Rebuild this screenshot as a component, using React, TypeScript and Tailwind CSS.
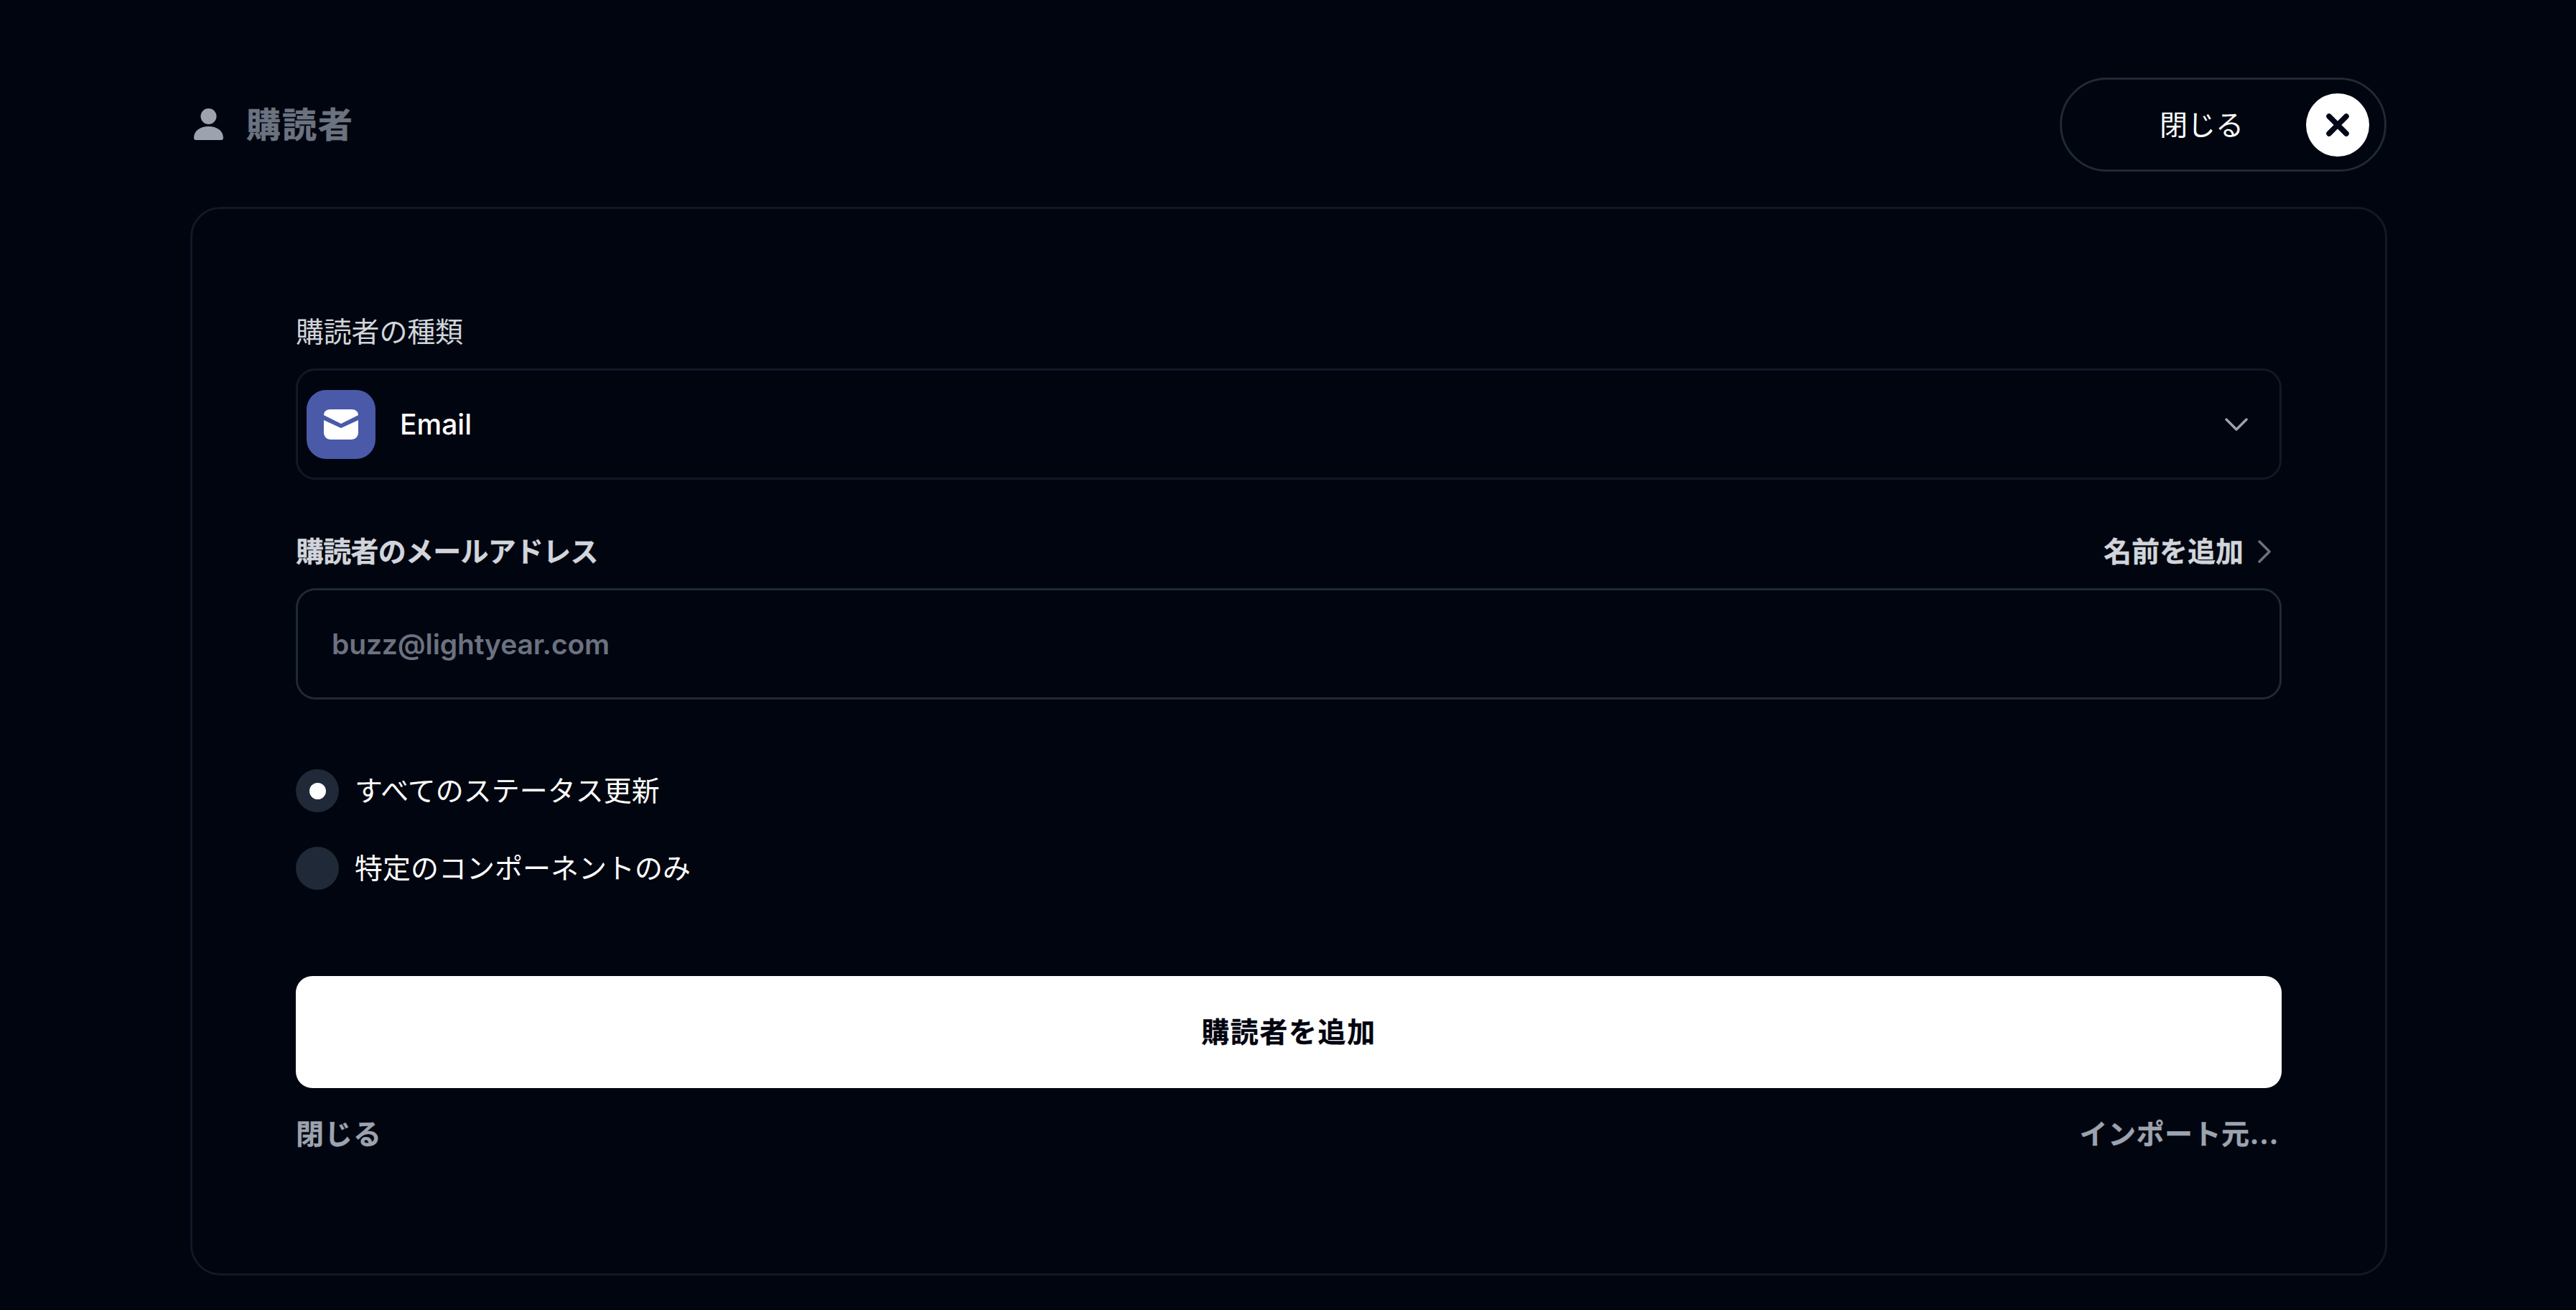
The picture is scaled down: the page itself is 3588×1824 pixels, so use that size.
import React from "react";

const font = "font-['Inter','Noto_Sans_CJK_JP',sans-serif]";

function UserIcon() {
  return (
    <svg width="41" height="45" viewBox="0 0 41 45" fill="#9ca3af">
      <circle cx="20.5" cy="11" r="11" />
      <path d="M0 41 C0 31 9 25 20.5 25 C32 25 41 31 41 41 Q41 44 38 44 L3 44 Q0 44 0 41Z" />
    </svg>
  );
}

function CloseIcon() {
  return (
    <svg width="32" height="32" viewBox="0 0 32 32" fill="none" stroke="#020617" strokeWidth="7.5" strokeLinecap="round">
      <path d="M4 4 L28 28 M28 4 L4 28" />
    </svg>
  );
}

function MailIcon() {
  return (
    <svg width="48" height="42" viewBox="0 0 48 42" fill="#fff">
      <path d="M0 8 L24 20 L48 8 C48 3 44 0 39 0 L9 0 C4 0 0 3 0 8 Z" />
      <path d="M0 15 L24 26 L48 15 L48 32 C48 38 44 42 38 42 L10 42 C4 42 0 38 0 32 Z" />
    </svg>
  );
}

function Radio({ checked, label }: { checked?: boolean; label: string }) {
  return (
    <div className="flex items-center gap-[22px] h-[60px]">
      <span className="flex items-center justify-center w-[60px] h-[60px] rounded-full bg-[#1f2937]">
        {checked && <span className="block w-[23px] h-[23px] rounded-full bg-white" />}
      </span>
      <span className="text-[39px] leading-[60px] text-white">{label}</span>
    </div>
  );
}

export default function App() {
  return (
    <div className={`${font} min-h-screen bg-[#01050f] pl-[265px] pr-[263px] pt-[108px]`}>
      <header className="flex items-center justify-between h-[131px]">
        <div className="flex items-center gap-[32px] pl-[5px]">
          <UserIcon />
          <h1 className="text-[48px] leading-[60px] font-bold tracking-[2px] text-[#6b7280] [-webkit-text-stroke:0.6px_#6b7280]">購読者</h1>
        </div>
        <button className="flex items-center justify-between w-[455px] h-[131px] mr-[1px] rounded-full border-[3px] border-[#1f2937] pl-[136px] pr-[21px]">
          <span className="text-[39px] leading-[60px] text-white">閉じる</span>
          <span className="flex items-center justify-center w-[88px] h-[88px] rounded-full bg-white">
            <CloseIcon />
          </span>
        </button>
      </header>

      <main className="mt-[49px] h-[1488px] rounded-[42px] border-[3px] border-[#111827] px-[144px] pt-[141px]">
        <label className="block text-[39px] leading-[60px] tracking-[-0.2px] text-[#d1d5db]">購読者の種類</label>
        <div className="mt-[21px] flex items-center justify-between h-[155px] rounded-[27px] border-[3px] border-[#111827] pl-[12px] pr-[44px]">
          <div className="flex items-center gap-[34px]">
            <span className="flex items-center justify-center w-[96px] h-[96px] rounded-[27px] bg-[#4a5aa8]">
              <MailIcon />
            </span>
            <span className="text-[39px] leading-[60px] font-medium text-white">Email</span>
          </div>
          <svg width="32" height="18" viewBox="0 0 32 18" fill="none" stroke="#9ca3af" strokeWidth="3.5" strokeLinecap="round" strokeLinejoin="round">
            <path d="M2 2 L16 16 L30 2" />
          </svg>
        </div>

        <div className="mt-[70px] flex items-center justify-between h-[60px]">
          <label className="text-[39px] leading-[60px] font-bold tracking-[-0.75px] text-[#d1d5db] [-webkit-text-stroke:0.3px_#d1d5db]">購読者のメールアドレス</label>
          <div className="flex items-center gap-[20px] pr-[15px]">
            <span className="text-[39px] leading-[60px] font-bold text-[#d1d5db] [-webkit-text-stroke:0.3px_#d1d5db]">名前を追加</span>
            <svg width="18" height="32" viewBox="0 0 18 32" fill="none" stroke="#6b7280" strokeWidth="3.5" strokeLinecap="round" strokeLinejoin="round">
              <path d="M2 2 L16 16 L2 30" />
            </svg>
          </div>
        </div>
        <div className="mt-[21px] flex items-center h-[155px] rounded-[27px] border-[3px] border-[#1f2937] pl-[47px]">
          <span className="text-[39px] leading-[60px] font-semibold tracking-[-0.15px] text-[#6b7280]">buzz@lightyear.com</span>
        </div>

        <div className="mt-[97px] flex flex-col gap-[48px]">
          <Radio checked label="すべてのステータス更新" />
          <Radio label="特定のコンポーネントのみ" />
        </div>

        <button className="mt-[120px] flex items-center justify-center w-full h-[156px] rounded-[23px] bg-white text-[39px] leading-[60px] font-bold tracking-[1.6px] text-[#02040f] [-webkit-text-stroke:0.3px_#02040f]">
          購読者を追加
        </button>

        <div className="mt-[34px] flex items-center justify-between h-[60px] pr-[4px]">
          <span className="text-[39px] leading-[60px] font-bold tracking-[1px] text-[#9ca3af] [-webkit-text-stroke:0.3px_#9ca3af]">閉じる</span>
          <span className="text-[39px] leading-[60px] font-bold tracking-[0.5px] text-[#9ca3af] [-webkit-text-stroke:0.3px_#9ca3af]">インポート元...</span>
        </div>
      </main>
    </div>
  );
}
